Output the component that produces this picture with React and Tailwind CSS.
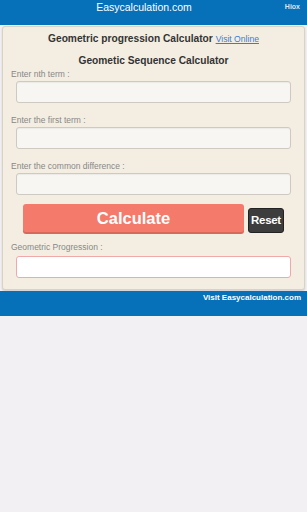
export default function App() {
	const fields = [
		"Enter nth term :",
		"Enter the first term :",
		"Enter the common difference :",
	];

	return (
		<div className="min-h-[512px] bg-[#f2f0f2] font-['Liberation_Sans',Arial,sans-serif]">
			<div className="relative flex h-[25px] items-start justify-center bg-[#0670b8] pr-[19px] pt-[1px] text-white">
				<span className="text-[10.5px] leading-[13px]">Easycalculation.com</span>
				<span className="absolute right-[7px] top-[2px] text-[7px] font-bold text-[#d6e6f5]">
					Hiox
				</span>
			</div>
			<div className="pt-px">
				<div className="mx-[2px] rounded-[3px] border border-[#d9d3c4] bg-[#f3eee1] px-[8px] pb-[11px] pt-[5px] shadow-[0_1px_2px_rgba(0,0,0,0.15)]">
					<div className="text-center text-[10.2px] font-bold leading-[14px] text-[#333]">
						Geometric progression Calculator{" "}
						<a className="text-[8.6px] font-normal text-[#3a7bd5] underline">
							Visit Online
						</a>
					</div>
					<div className="mt-[8px] text-center text-[10.2px] font-bold leading-[14px] text-[#333]">
						Geometic Sequence Calculator
					</div>
					{fields.map((f, i) => (
						<div key={f} className={i < 2 ? "mb-[11px]" : "mb-[9px]"}>
							<div className="text-[8.5px] leading-[12px] text-[#888]">{f}</div>
							<div className="ml-[5px] mr-[5px] mt-[1px] h-[22px] rounded-[3px] border border-[#cfcac0] bg-[#f7f6f3] shadow-[inset_0_1px_1px_rgba(0,0,0,0.05)]" />
						</div>
					))}
					<div className="flex items-end pl-[12px]">
						<button className="h-[28px] w-[221px] rounded-[3px] bg-[#f47a6c] text-[16.5px] font-bold text-white shadow-[0_2px_0_#d8685c]">
							Calculate
						</button>
						<button className="mb-[-1px] ml-[4px] h-[25px] w-[36px] rounded-[3px] border border-[#222] bg-[#3d3d3d] text-[11.5px] font-bold tracking-[-0.3px] text-white">
							Reset
						</button>
					</div>
					<div className="mt-[9px] text-[8.5px] leading-[12px] text-[#888]">
						Geometric Progression :
					</div>
					<div className="ml-[5px] mr-[5px] mt-[3px] h-[22px] rounded-[3px] border border-[#f0a8a8] bg-white" />
				</div>
			</div>
			<div className="mt-px flex h-[25px] items-start justify-end bg-[#0670b8] pr-[6px] pt-[1px]">
				<span className="text-[8px] font-bold leading-[12px] text-white">
					Visit Easycalculation.com
				</span>
			</div>
		</div>
	);
}
